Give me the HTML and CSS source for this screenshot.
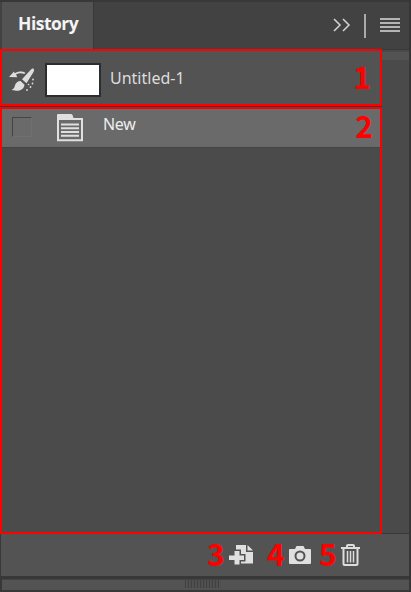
FILE: index.html
```
<!DOCTYPE html>
<html lang="en">
<head>
    <meta charset="UTF-8">
    <meta name="viewport" content="width=device-width, initial-scale=1.0">
    <title>History</title>
    <link rel="stylesheet" href="styles.css">
</head>
<body>
    <div class="panel">
        <div class="header">
            <div class="tab"><span class="tab-name">History</span></div>
            <div class="header-tools">
                <svg class="chevrons" width="18" height="14" viewBox="0 0 18 14"><path d="M1 1l6 6-6 6M10 1l6 6-6 6"/></svg>
                <span class="divider"></span>
                <svg class="menu" width="20" height="14" viewBox="0 0 20 14"><path d="M0 1h20M0 5h20M0 9h20M0 13h20"/></svg>
            </div>
        </div>

        <div class="content">
            <div class="list">
                <div class="snapshot">
                    <svg class="brush" width="26" height="24" viewBox="0 0 26 24">
                        <path d="M24.500.8c1 .7.600 2 0 3.200L17.500 15.200l-4.500-4 8.500-9.200c1-1 2-1.900 3-1.200z"/>
                        <path d="M11.500 13l4 3.700c-.5 3.500-3 6-7.500 6-2.200.1-4-.2-5.200-.9 2.200-.7 2.600-2.500 3.200-4.500.8-2.700 2.800-4.300 5.500-4.300z"/>
                        <path d="M0 9l5-5.500.7 1.700C9 3 13.500 3 16.500 4.700l-1.200 1.200C12.500 4.800 9.500 5 7 6.500l1.300 2.800z"/>
                        <circle cx="24" cy="11.500" r=".9"/><circle cx="23.500" cy="15.500" r=".9"/><circle cx="19.500" cy="16.500" r=".8"/>
                        <circle cx="21.500" cy="19" r=".9"/><circle cx="18" cy="22" r=".9"/>
                    </svg>
                    <div class="thumb"></div>
                    <span class="doc-name">Untitled-1</span>
                    <span class="num">1</span>
                </div>
                <div class="states">
                    <div class="state">
                        <span class="check"></span>
                        <svg class="doc" width="26" height="28" viewBox="0 0 26 28">
                            <path class="fill" d="M0 6V1q0-1 1-1h13q1 0 1.500 1l1 3H26v2z"/>
                            <path class="line" d="M1 4v22.200h24V5"/>
                            <path class="line" d="M4 10.500h18M4 14.200h18M4 18h18M4 21.700h18"/>
                        </svg>
                        <span class="state-name">New</span>
                        <span class="num">2</span>
                    </div>
                </div>
            </div>
            <div class="scroll"><div class="scroll-top"></div></div>
        </div>

        <div class="footer">
            <span class="num">3</span>
            <svg class="new-doc" width="25" height="20" viewBox="0 0 25 20">
                <path d="M7 0h10v7h7v11.500H7z"/>
                <path d="M18.500 0L24 5.500h-5.500z"/>
                <path class="plus" d="M5.500 6h5v4.500H15v4.500h-4.500v4.500h-5V15H0v-4.500h5.500z"/>
            </svg>
            <span class="num num-camera">4</span>
            <svg class="camera" width="22" height="18" viewBox="0 0 22 18">
                <path fill-rule="evenodd" d="M1 3h5l1.500-3h7L16 3h5q1 0 1 1v13q0 1-1 1H1q-1 0-1-1V4q0-1 1-1zM11 4.500a5.500 5.500 0 1 0 0 11 5.500 5.500 0 0 0 0-11zM11 6.500a3.500 3.500 0 1 1 0 7 3.500 3.500 0 0 1 0-7z"/>
            </svg>
            <span class="num num-trash">5</span>
            <svg class="trash" width="19" height="22" viewBox="0 0 19 22">
                <path d="M0 4h19M6 4V2q0-1 1-1h5q1 0 1 1v2M2.500 4v16q0 1 1 1h12q1 0 1-1V4"/>
                <path class="slats" d="M6.500 7v11.500M9.500 7v11.500M12.500 7v11.500"/>
            </svg>
        </div>
        <div class="resize"><span class="grip"></span></div>
    </div>
</body>
</html>
```

FILE: styles.css
```
body {
    margin: 0;
    background: #383838;
    font-family: "Noto Sans", sans-serif;
    color: #ddd;
    overflow: hidden;
}
.panel {
    width: 411px;
    height: 592px;
    box-sizing: border-box;
    border-right: 2px solid #363636;
    display: flex;
    flex-direction: column;
}
.header {
    height: 49px;
    box-sizing: border-box;
    padding: 2px 0 0 2px;
    display: flex;
    justify-content: space-between;
    background: linear-gradient(#383838 2px, #424242 2px);
}
.tab {
    width: 91px;
    background: #535353;
    border-right: 1px solid #383838;
}
.tab-name {
    display: block;
    padding: 9px 0 0 16px;
    font: bold 17.5px/25px "Open Sans", sans-serif;
    letter-spacing: -0.5px;
    color: #f4f4f4;
}
.header-tools {
    display: flex;
    align-items: flex-start;
    padding: 12px 9px 0 0;
}
.chevrons {
    margin: 4px 13px 0 0;
    fill: none;
    stroke: #d4d4d4;
    stroke-width: 1.5;
}
.divider {
    width: 2px;
    height: 24px;
    margin-right: 14px;
    background: #aaa;
}
.menu {
    margin-top: 4px;
    stroke: #b4b4b4;
    stroke-width: 2;
}
.content {
    height: 485px;
    display: flex;
    background: #4a4a4a;
}
.list {
    width: 382px;
    display: flex;
    flex-direction: column;
    gap: 1px;
    background: #383838;
}
.snapshot {
    height: 57px;
    box-sizing: border-box;
    border: 2px solid #f00;
    background: #535353;
    display: flex;
    align-items: flex-start;
}
.brush {
    margin: 17px 0 0 7px;
    fill: #ddd;
}
.thumb {
    width: 52px;
    height: 30px;
    margin: 12px 0 0 10px;
    background: #fff;
    border: 2px solid #2b2d30;
}
.doc-name {
    margin: 15px 0 0 9px;
    font-size: 16px;
    line-height: 24px;
}
.num {
    font: bold 30px/30px "Noto Sans CJK SC", sans-serif;
    color: #f00;
}
.snapshot .num {
    margin: 10px 9px 0 auto;
}
.states {
    height: 427px;
    box-sizing: border-box;
    border: 2px solid #f00;
    background: #4b4b4b;
}
.state {
    height: 38px;
    display: flex;
    align-items: flex-start;
    background: #6a6a6a;
    border-bottom: 1px solid #444;
}
.check {
    width: 18px;
    height: 18px;
    margin: 8px 0 0 10px;
    border: 1px solid #707070;
    border-top-color: #444;
    border-left-color: #444;
}
.doc {
    margin: 5px 0 0 25px;
}
.doc .fill {
    fill: #e0e0e0;
}
.doc .line {
    fill: none;
    stroke: #e0e0e0;
    stroke-width: 2;
}
.state-name {
    margin: 3px 0 0 20px;
    font-size: 16px;
    line-height: 24px;
    letter-spacing: -0.3px;
    color: #eee;
}
.state .num {
    margin: 1px 7px 0 auto;
}
.scroll {
    flex: 1;
    box-sizing: border-box;
    padding-top: 2px;
    border-top: 1px solid #383838;
    border-bottom: 1px solid #383838;
}
.scroll-top {
    height: 8px;
    background: #535353;
}
.footer {
    height: 42px;
    box-sizing: border-box;
    margin-left: 1px;
    padding-left: 206px;
    display: flex;
    align-items: flex-start;
    background: #535353;
}
.footer .num {
    width: 17px;
    margin-top: 4px;
}
.footer svg {
    fill: #e0e0e0;
}
.new-doc {
    margin: 11px 0 0 5px;
    overflow: visible;
}
/* ring in the footer colour keeps the plus apart from the page */
.plus {
    stroke: #535353;
    stroke-width: 3;
    paint-order: stroke;
}
.footer .num-camera {
    margin-left: 13px;
}
.camera {
    margin: 12px 0 0 5px;
}
.footer .num-trash {
    margin-left: 8px;
}
.footer .trash {
    margin: 10px 0 0 5px;
    fill: none;
    stroke: #ddd;
    stroke-width: 2;
}
.trash .slats {
    stroke-width: 1.5;
}
.resize {
    flex: 1;
    box-sizing: border-box;
    margin: 3px 0 2px 2px;
    border-top: 1px solid #444;
    background: #535353;
    display: flex;
    justify-content: center;
}
.grip {
    width: 36px;
    height: 8px;
    margin-right: 5px;
    background: repeating-linear-gradient(90deg, #404040 0 1px, #505050 1px 3px);
}
```
